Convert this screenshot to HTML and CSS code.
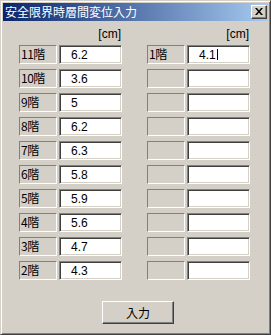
FILE: index.html
```html
<!DOCTYPE html>
<html lang="ja">
<head>
    <meta charset="UTF-8">
    <title>安全限界時層間変位入力</title>
    <link rel="stylesheet" href="styles.css">
</head>
<body>
    <div class="window">
        <div class="titlebar">
            <span class="title">安全限界時層間変位入力</span>
            <span class="close">
                <svg width="8" height="7" viewBox="0 0 8 7">
                    <path d="M0 0h2l2 2.5L6 0h2L5 3.5 8 7H6L4 4.5 2 7H0l3-3.5z" fill="#000"/>
                </svg>
            </span>
        </div>

        <div class="content">
            <div class="columns">
                <div class="col">
                    <div class="unit">[cm]</div>
                    <div class="label">11階</div><div class="field">6.2</div>
                    <div class="label">10階</div><div class="field">3.6</div>
                    <div class="label">9階</div><div class="field">5</div>
                    <div class="label">8階</div><div class="field">6.2</div>
                    <div class="label">7階</div><div class="field">6.3</div>
                    <div class="label">6階</div><div class="field">5.8</div>
                    <div class="label">5階</div><div class="field">5.9</div>
                    <div class="label">4階</div><div class="field">5.6</div>
                    <div class="label">3階</div><div class="field">4.7</div>
                    <div class="label">2階</div><div class="field">4.3</div>
                </div>
                <div class="col">
                    <div class="unit">[cm]</div>
                    <div class="label">1階</div><div class="field">4.1<span class="caret"></span></div>
                    <div class="label"></div><div class="field"></div>
                    <div class="label"></div><div class="field"></div>
                    <div class="label"></div><div class="field"></div>
                    <div class="label"></div><div class="field"></div>
                    <div class="label"></div><div class="field"></div>
                    <div class="label"></div><div class="field"></div>
                    <div class="label"></div><div class="field"></div>
                    <div class="label"></div><div class="field"></div>
                    <div class="label"></div><div class="field"></div>
                </div>
            </div>
            <button class="btn">入力</button>
        </div>
    </div>
</body>
</html>
```

FILE: styles.css
```css
body {
    margin: 0;
    font-family: "Liberation Sans", "Noto Sans CJK JP", sans-serif;
    font-size: 12px;
}
.window {
    width: 271px;
    height: 335px;
    box-sizing: border-box;
    background: #d4d0c8;
    border: 1px solid;
    border-color: #d4d0c8 #404040 #404040 #d4d0c8;
    box-shadow: inset 1px 1px #fff, inset -1px -1px #808080;
    padding: 2px;
}
.titlebar {
    height: 18px;
    background: linear-gradient(to right, #0a246a, #a6caf0);
    display: flex;
    align-items: center;
    justify-content: space-between;
}
.title {
    color: #fff;
    font-family: "Noto Sans CJK JP", sans-serif;
    font-size: 12px;
    line-height: 18px;
    padding-left: 2px;
}
.close {
    width: 16px;
    height: 14px;
    box-sizing: border-box;
    margin-right: 1px;
    background: #d4d0c8;
    border: 1px solid;
    border-color: #fff #404040 #404040 #fff;
    box-shadow: inset -1px -1px #808080;
    display: flex;
    align-items: center;
    justify-content: center;
    padding: 0 1px 1px 0;
}
.content {
    padding: 0 0 0 16px;
}
.columns {
    display: flex;
    gap: 25px;
}
.col {
    display: grid;
    grid-template-columns: 38px 63px;
    grid-auto-rows: 19px;
    column-gap: 2px;
    row-gap: 5px;
}
.unit {
    grid-column: 1 / 3;
    height: 14px;
    margin-top: 6px;
    margin-bottom: -6px;
    text-align: right;
    line-height: 14px;
    font-family: "Liberation Sans", sans-serif;
    color: #000;
    padding-right: 1px;
}
.label {
    box-sizing: border-box;
    border: 1px solid;
    border-color: #808080 #fff #fff #808080;
    padding: 1px 0 0 1px;
    line-height: 14px;
    font-family: "Noto Sans CJK JP", sans-serif;
    letter-spacing: -0.5px;
}
.field {
    box-sizing: border-box;
    background: #fff;
    border: 1px solid;
    border-color: #808080 #fff #fff #808080;
    box-shadow: inset 1px 1px #404040, inset -1px -1px #d4d0c8;
    padding: 1px 0 0 11px;
    line-height: 16px;
}
.caret {
    display: inline-block;
    width: 1px;
    height: 11px;
    background: #000;
    vertical-align: -1px;
    margin-left: 1px;
}
.btn {
    display: block;
    width: 72px;
    height: 23px;
    margin: 21px 0 0 83px;
    padding: 0;
    background: #d4d0c8;
    border: 1px solid;
    border-color: #fff #404040 #404040 #fff;
    box-shadow: inset -1px -1px #808080;
    font-family: "Noto Sans CJK JP", sans-serif;
    font-size: 12px;
    color: #000;
}
```
